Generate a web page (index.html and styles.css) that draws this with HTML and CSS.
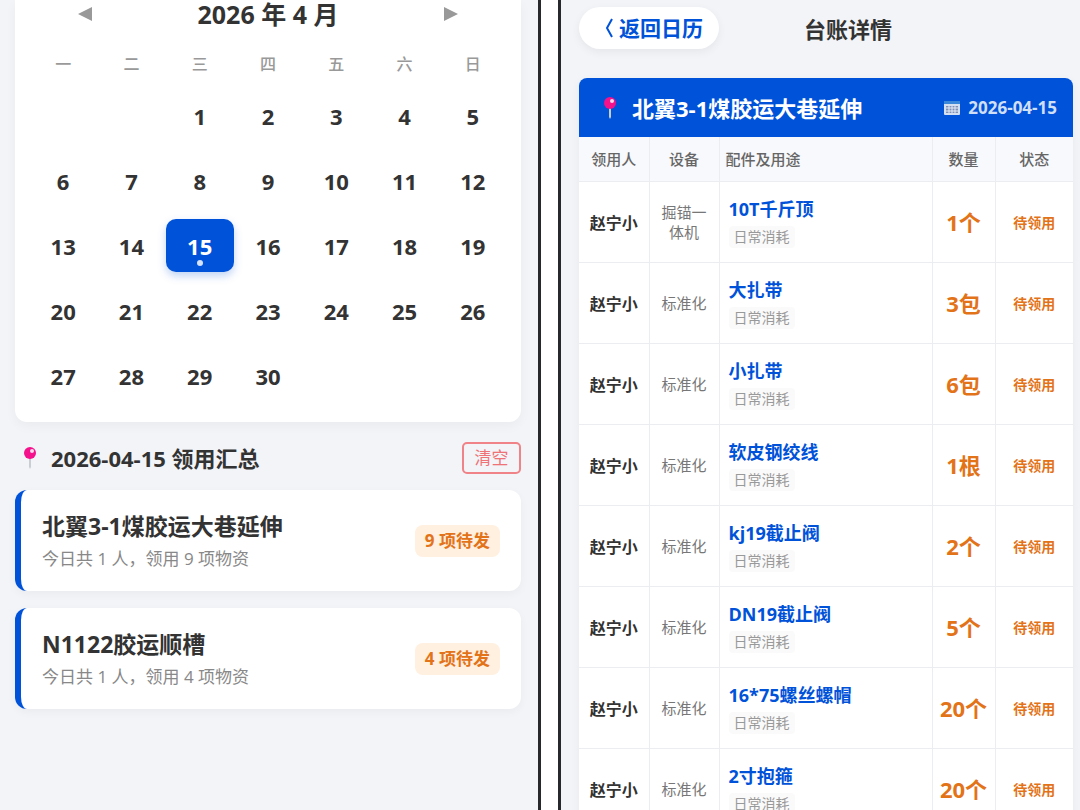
FILE: index.html
```html
<!DOCTYPE html>
<html lang="zh-CN">
<head>
    <meta charset="UTF-8">
    <meta name="viewport" content="width=device-width, initial-scale=1.0">
    <title>台账详情</title>
    <link rel="stylesheet" href="styles.css">
</head>
<body>
<svg class="symbols" aria-hidden="true">
    <symbol id="pin" viewBox="0 0 14 24">
        <path d="M6 12h2v9l-1 2-1-2z" fill="#c9ced4"/>
        <circle cx="7" cy="7" r="6" fill="#f5108c"/>
        <circle cx="9" cy="5" r="2" fill="#ffd9ec"/>
    </symbol>
    <symbol id="calendar" viewBox="0 0 16 16">
        <rect x="0" y="1" width="16" height="14" rx="1" fill="#d5dff2"/>
        <rect x="0" y="1" width="16" height="3" fill="#3a86d8"/>
        <path d="M2 6h12v7H2z" fill="#7f8fb5"/>
        <path d="M2 8h12M2 11h12M5 6v7M8 6v7M11 6v7" stroke="#e4ebf8" stroke-width="1"/>
    </symbol>
</svg>
<div class="container">
    <section class="panel panel_left">
        <div class="calendar">
            <div class="calendar_head">
                <button type="button" class="arrow" aria-label="上个月"><svg viewBox="0 0 14 14"><path d="M14 0v14L0 7z"/></svg></button>
                <h2>2026 年 4 月</h2>
                <button type="button" class="arrow" aria-label="下个月"><svg viewBox="0 0 14 14"><path d="M0 0v14L14 7z"/></svg></button>
            </div>
            <div class="week">
                <span>一</span><span>二</span><span>三</span><span>四</span><span>五</span><span>六</span><span>日</span>
            </div>
            <div class="days">
                <button type="button" class="first">1</button>
                <button type="button">2</button>
                <button type="button">3</button>
                <button type="button">4</button>
                <button type="button">5</button>
                <button type="button">6</button>
                <button type="button">7</button>
                <button type="button">8</button>
                <button type="button">9</button>
                <button type="button">10</button>
                <button type="button">11</button>
                <button type="button">12</button>
                <button type="button">13</button>
                <button type="button">14</button>
                <button type="button" class="on">15</button>
                <button type="button">16</button>
                <button type="button">17</button>
                <button type="button">18</button>
                <button type="button">19</button>
                <button type="button">20</button>
                <button type="button">21</button>
                <button type="button">22</button>
                <button type="button">23</button>
                <button type="button">24</button>
                <button type="button">25</button>
                <button type="button">26</button>
                <button type="button">27</button>
                <button type="button">28</button>
                <button type="button">29</button>
                <button type="button">30</button>
            </div>
        </div>

        <div class="summary_head">
            <svg class="pin"><use href="#pin"/></svg>
            <h3>2026-04-15 领用汇总</h3>
            <button type="button" class="clear">清空</button>
        </div>

        <div class="summary">
            <div class="info">
                <h4>北翼3-1煤胶运大巷延伸</h4>
                <p>今日共 1 人，领用 9 项物资</p>
            </div>
            <span class="badge">9 项待发</span>
        </div>
        <div class="summary">
            <div class="info">
                <h4>N1122胶运顺槽</h4>
                <p>今日共 1 人，领用 4 项物资</p>
            </div>
            <span class="badge">4 项待发</span>
        </div>
    </section>

    <section class="panel panel_right">
        <div class="top">
            <a href="#" class="back"><svg viewBox="0 0 8 20"><path d="M7 1L2 10l5 9"/></svg>返回日历</a>
            <h1>台账详情</h1>
        </div>

        <div class="detail">
            <div class="detail_head">
                <svg class="pin"><use href="#pin"/></svg>
                <h2>北翼3-1煤胶运大巷延伸</h2>
                <span class="date"><svg><use href="#calendar"/></svg>2026-04-15</span>
            </div>
            <table>
                <thead>
                <tr>
                    <th class="col_user">领用人</th>
                    <th class="col_device">设备</th>
                    <th class="col_part">配件及用途</th>
                    <th class="col_num">数量</th>
                    <th class="col_state">状态</th>
                </tr>
                </thead>
                <tbody>
                <tr>
                    <td class="user">赵宁小</td>
                    <td class="device">掘锚一体机</td>
                    <td class="part"><b>10T千斤顶</b><span>日常消耗</span></td>
                    <td class="num">1个</td>
                    <td class="state">待领用</td>
                </tr>
                <tr>
                    <td class="user">赵宁小</td>
                    <td class="device">标准化</td>
                    <td class="part"><b>大扎带</b><span>日常消耗</span></td>
                    <td class="num">3包</td>
                    <td class="state">待领用</td>
                </tr>
                <tr>
                    <td class="user">赵宁小</td>
                    <td class="device">标准化</td>
                    <td class="part"><b>小扎带</b><span>日常消耗</span></td>
                    <td class="num">6包</td>
                    <td class="state">待领用</td>
                </tr>
                <tr>
                    <td class="user">赵宁小</td>
                    <td class="device">标准化</td>
                    <td class="part"><b>软皮钢绞线</b><span>日常消耗</span></td>
                    <td class="num">1根</td>
                    <td class="state">待领用</td>
                </tr>
                <tr>
                    <td class="user">赵宁小</td>
                    <td class="device">标准化</td>
                    <td class="part"><b>kj19截止阀</b><span>日常消耗</span></td>
                    <td class="num">2个</td>
                    <td class="state">待领用</td>
                </tr>
                <tr>
                    <td class="user">赵宁小</td>
                    <td class="device">标准化</td>
                    <td class="part"><b>DN19截止阀</b><span>日常消耗</span></td>
                    <td class="num">5个</td>
                    <td class="state">待领用</td>
                </tr>
                <tr>
                    <td class="user">赵宁小</td>
                    <td class="device">标准化</td>
                    <td class="part"><b>16*75螺丝螺帽</b><span>日常消耗</span></td>
                    <td class="num">20个</td>
                    <td class="state">待领用</td>
                </tr>
                <tr>
                    <td class="user">赵宁小</td>
                    <td class="device">标准化</td>
                    <td class="part"><b>2寸抱箍</b><span>日常消耗</span></td>
                    <td class="num">20个</td>
                    <td class="state">待领用</td>
                </tr>
                </tbody>
            </table>
        </div>
    </section>
</div>
</body>
</html>
```
FILE: styles.css
```css
* {
    margin: 0;
    padding: 0;
    box-sizing: border-box;
}
body {
    background-color: #fff;
    color: #333;
    font-family: "Open Sans", "Noto Sans CJK SC", sans-serif;
}
button {
    border: none;
    background: none;
    color: inherit;
    font-family: inherit;
    cursor: pointer;
}
a {
    text-decoration: none;
}
.symbols {
    display: none;
}
.container {
    display: grid;
    grid-template-columns: 541fr 522fr;
    column-gap: 17px;
    height: 100vh;
    overflow: hidden;
}
.panel {
    min-width: 0;
    background-color: #f2f4f8;
}
.panel_left {
    padding: 0 17px 0 15px;
    border-right: 3px solid #26282c;
}
.panel_right {
    padding: 7px 7px 0 18px;
    border-left: 3px solid #26282c;
}

/* 日历 */
.calendar {
    padding: 0 14px 20px;
    border-radius: 0 0 12px 12px;
    background-color: #fff;
    box-shadow: 0 4px 12px rgba(0, 0, 0, .04);
}
.calendar_head {
    display: flex;
    justify-content: space-between;
    align-items: center;
    height: 28px;
    padding: 0 42px;
}
.calendar_head h2 {
    font-size: 25px;
    line-height: 28px;
    font-weight: bold;
}
.arrow {
    width: 28px;
    height: 28px;
}
.arrow svg {
    display: block;
    width: 14px;
    height: 14px;
    margin: 0 auto;
    fill: #999;
}
.week, .days {
    display: grid;
    grid-template-columns: repeat(7, 1fr);
    text-align: center;
}
.week {
    margin: 25px 0 14px;
    color: #999;
    font-size: 16px;
    line-height: 22px;
    font-weight: 500;
}
.days {
    row-gap: 12px;
}
.days button {
    position: relative;
    height: 53px;
    border-radius: 10px;
    font-size: 22px;
    line-height: 50px;
    font-weight: bold;
}
.days .first {
    grid-column-start: 3;
}
.days .on {
    background-color: #0052d9;
    color: #fff;
    box-shadow: 0 4px 8px rgba(0, 82, 217, .25);
}
.days .on::after {
    content: "";
    position: absolute;
    left: 50%;
    bottom: 6px;
    width: 6px;
    height: 6px;
    margin-left: -3px;
    border-radius: 50%;
    background-color: #d5e3ff;
}

/* 领用汇总 */
.pin {
    flex: none;
    width: 14px;
    height: 24px;
}
.summary_head {
    display: flex;
    align-items: center;
    margin: 20px 0 16px;
    padding-left: 8px;
}
.summary_head h3 {
    flex: 1;
    margin-left: 14px;
    font-size: 22px;
    line-height: 30px;
    font-weight: bold;
}
.clear {
    width: 59px;
    height: 32px;
    border: 2px solid #f08387;
    border-radius: 5px;
    color: #ee7277;
    font-size: 17px;
    line-height: 26px;
}
.summary {
    display: flex;
    justify-content: space-between;
    align-items: center;
    margin-bottom: 17px;
    padding: 18px 21px;
    border-left: 6px solid #0052d9;
    border-radius: 12px;
    background-color: #fff;
    box-shadow: 0 3px 10px rgba(0, 0, 0, .04);
}
.summary h4 {
    font-size: 23px;
    line-height: 37px;
    font-weight: bold;
}
.summary p {
    color: #888;
    font-size: 17px;
    line-height: 28px;
}
.badge {
    padding: 3px 10px;
    border-radius: 8px;
    background-color: #fff0e0;
    color: #e37318;
    font-size: 17px;
    line-height: 26px;
    font-weight: bold;
}

/* 台账详情 */
.top {
    display: grid;
    grid-template-columns: 140px 1fr 96px;
    align-items: center;
    margin-bottom: 29px;
}
.top h1 {
    padding-top: 2px;
    font-size: 22px;
    line-height: 38px;
    font-weight: bold;
    text-align: center;
}
.back {
    display: flex;
    justify-content: center;
    align-items: center;
    gap: 6px;
    height: 42px;
    padding-left: 10px;
    border-radius: 21px;
    background-color: #fff;
    color: #0052d9;
    font-size: 21px;
    line-height: 30px;
    font-weight: bold;
    box-shadow: 0 3px 10px rgba(0, 0, 0, .06);
}
.back svg {
    width: 8px;
    height: 20px;
    fill: none;
    stroke: #0052d9;
    stroke-width: 2;
}
.detail {
    border-radius: 8px;
    background-color: #fff;
    overflow: hidden;
    box-shadow: 0 3px 10px rgba(0, 0, 0, .05);
}
.detail_head {
    display: flex;
    align-items: center;
    height: 59px;
    padding: 0 16px 0 24px;
    background-color: #0052d9;
    color: #fff;
}
.detail_head h2 {
    flex: 1;
    margin-left: 15px;
    font-size: 22px;
    line-height: 30px;
    font-weight: bold;
}
.date {
    display: flex;
    align-items: center;
    gap: 8px;
    color: #d0dff8;
    font-size: 17px;
    font-weight: bold;
}
.date svg {
    width: 16px;
    height: 16px;
}
table {
    width: 100%;
    border-collapse: collapse;
    table-layout: fixed;
}
th {
    height: 44px;
    background-color: #f8f9fc;
    color: #666;
    font-size: 15px;
    font-weight: 500;
}
th, td {
    border-right: 1px solid #ebedf0;
    border-bottom: 1px solid #ebedf0;
    text-align: center;
}
th:last-child, td:last-child {
    border-right: none;
}
td {
    height: 81px;
}
.col_user, .col_device {
    width: 70px;
}
.col_num {
    width: 63px;
}
.col_state {
    width: 78px;
}
.col_part {
    padding-left: 6px;
    text-align: left;
}
.user {
    font-size: 16px;
    font-weight: bold;
}
.device {
    padding: 0 12px;
    color: #777;
    font-size: 15px;
    line-height: 20px;
}
.part {
    padding-left: 9px;
    text-align: left;
}
.part b {
    display: block;
    color: #0052d9;
    font-size: 18px;
    line-height: 26px;
}
.part span {
    display: inline-block;
    margin-top: 4px;
    padding: 0 5px;
    border-radius: 4px;
    background-color: #fafafa;
    color: #999;
    font-size: 14px;
    line-height: 22px;
}
.num {
    color: #e37318;
    font-size: 22px;
    line-height: 28px;
    font-weight: bold;
}
.state {
    color: #e37318;
    font-size: 14px;
    font-weight: bold;
}
```
